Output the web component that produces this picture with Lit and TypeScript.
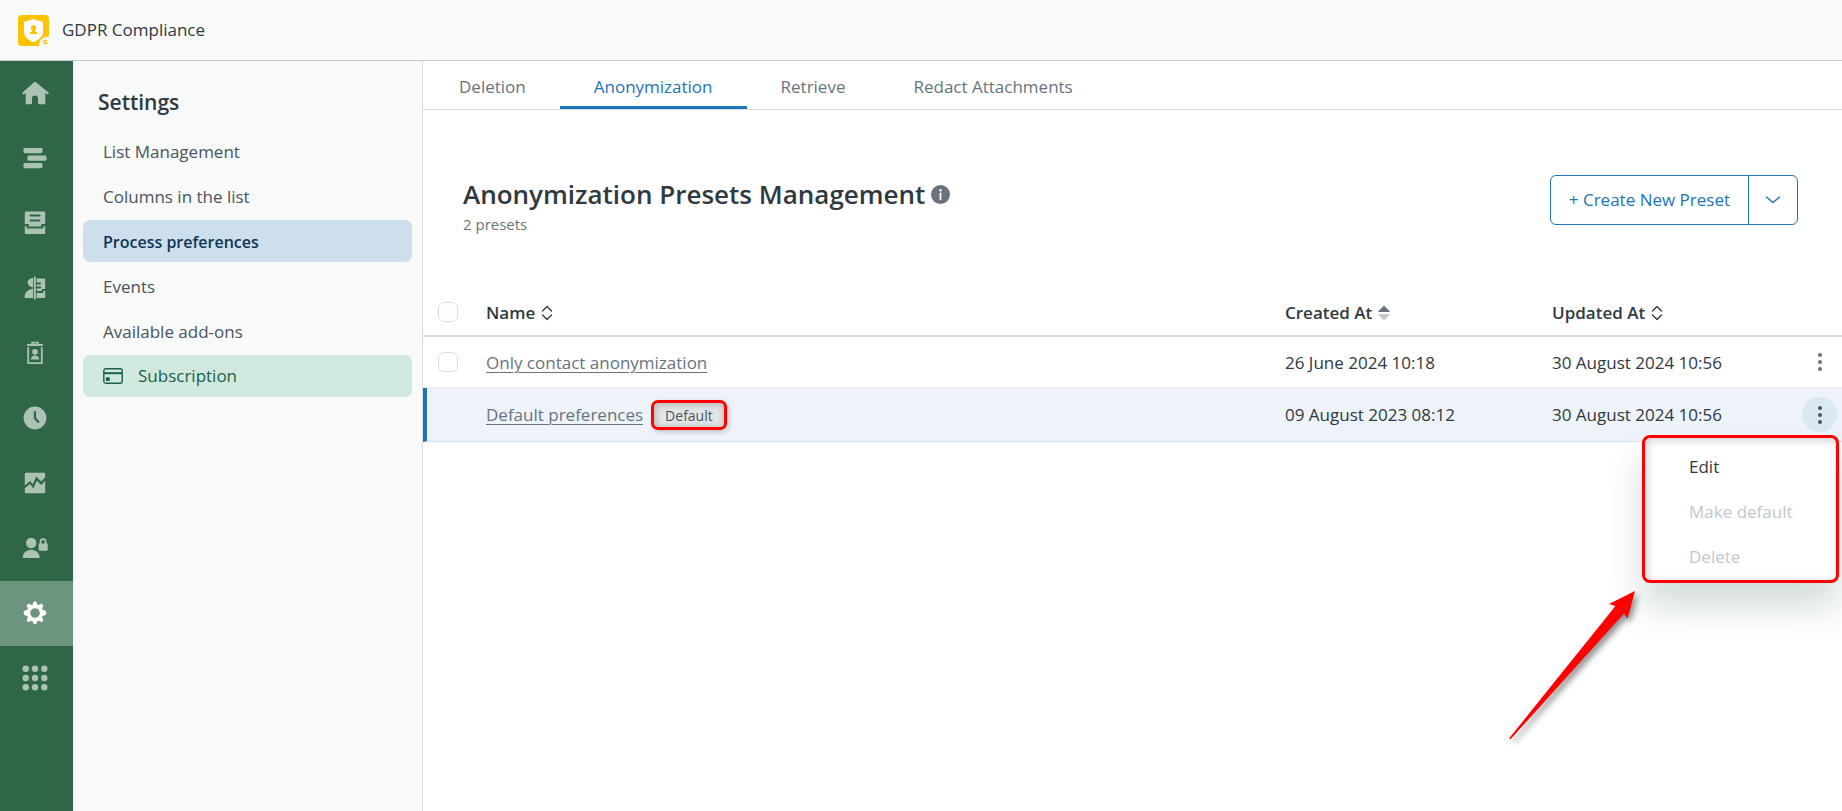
import { LitElement, html, svg, css, nothing } from "lit";
import { customElement, state } from "lit/decorators.js";
import { classMap } from "lit/directives/class-map.js";

interface NavIcon {
  label: string;
  active?: boolean;
  art: unknown;
}

interface Preset {
  name: string;
  created: string;
  updated: string;
  isDefault: boolean;
}

const NAV: NavIcon[] = [
  {
    label: "Home",
    art: svg`<path d="M13.4 2.9a1 1 0 0 1 1.2 0L27.2 13.300a1.100 1.100 0 0 1-1.300 1.800L24.300 14v10.200a1 1 0 0 1-1 1H18a1 1 0 0 1-1-1v-4.700a3 3 0 0 0-6 0v4.700a1 1 0 0 1-1 1H5.700a1 1 0 0 1-1-1V14l-1.600 1.100a1.100 1.100 0 0 1-1.300-1.800Z"/>`,
  },
  {
    label: "Views",
    art: svg`<rect x="2.500" y="4" width="19" height="5.200" rx="1.400"/><rect x="6.500" y="11.500" width="19" height="5.200" rx="1.400"/><rect x="2.500" y="19" width="19" height="5.200" rx="1.400"/>`,
  },
  {
    label: "Customer lists",
    art: svg`<path fill-rule="evenodd" d="M5 2.500h18a1.200 1.200 0 0 1 1.200 1.200V15h-4v2.500H7.800V15h-4V3.700A1.200 1.200 0 0 1 5 2.500Zm4.500 3a1 1 0 0 0 0 2h9a1 1 0 0 0 0-2Zm0 5a1 1 0 0 0 0 2h9a1 1 0 0 0 0-2Z"/><path d="M3.800 17.300h2v2.200h16.400v-2.200h2v6.500a1.200 1.200 0 0 1-1.200 1.200H5a1.200 1.200 0 0 1-1.200-1.200Z"/>`,
  },
  {
    label: "Tickets and users",
    art: svg`<rect x="12.800" y="2.500" width="2" height="23" rx="1"/><path d="M12 4v9.500c-7.200-1-7.200-9.300 0-9.500ZM12 14.500V24H3.700v-2c.5-4.500 4-6.500 8.300-7.500Z"/><path fill-rule="evenodd" d="M15.600 4.500H23a1.200 1.200 0 0 1 1.200 1.200V15h-3.500v2h-5.100v-2.500H19a1 1 0 0 0 0-2h-3.400v-2H19a1 1 0 0 0 0-2h-3.400Z"/><path d="M15.600 19h6.600v-2h2v6a1 1 0 0 1-1 1h-7.600Z"/>`,
  },
  {
    label: "Deleted users",
    art: svg`<path fill="none" stroke="currentColor" stroke-width="1.800" d="M7.200 8v16.200h13.600V8M11.200 6V3.700h5.600V6"/><rect x="5.800" y="5" width="16.400" height="2" rx="1"/><circle cx="14" cy="12.800" r="2.900"/><path d="M9.800 20.500c0-5.400 8.400-5.400 8.400 0Z"/>`,
  },
  {
    label: "Scheduled processes",
    art: svg`<path fill-rule="evenodd" d="M14 2.600a11.400 11.400 0 1 1 0 22.800 11.400 11.400 0 0 1 0-22.800Zm-1.200 5.600v6.400l4.200 4.600 1.700-1.500-3.700-4V8.200a1.100 1.100 0 0 0-2.200 0Z"/>`,
  },
  {
    label: "Reports",
    art: svg`<path d="M4.900 3.800h18.200a1.100 1.100 0 0 1 1.100 1.100v3.300l-4 4.300-5-5-3.500 7.700-2.600-3.200-5.300 4.500V4.900a1.100 1.100 0 0 1 1.100-1.100Z"/><path d="m3.800 19.200 5.200-4.300 3.300 4.600 3.500-7.700 4.400 4.200 4-4.300v11.400a1.100 1.100 0 0 1-1.100 1.100H4.900a1.100 1.100 0 0 1-1.100-1.100Z"/>`,
  },
  {
    label: "Permissions",
    art: svg`<circle cx="10.200" cy="9" r="5.200"/><path d="M1.700 24c0-11 17-11 17 0Z"/><path fill-rule="evenodd" d="M17.700 9.500h1V7.600a3.400 3.400 0 0 1 6.800 0v1.900h1.200v6.300a1 1 0 0 1-1 1h-7a1 1 0 0 1-1-1Zm2.800 0h3.200V7.600a1.600 1.600 0 0 0-3.200 0Z"/>`,
  },
  {
    label: "Settings",
    active: true,
    art: svg`<path fill-rule="evenodd" d="M14 2.600c1.100 0 1.800.7 1.900 1.700l.3 1.200 1.500.6 1.300-.9c.8-.5 1.800-.6 2.600.2s.8 1.900.2 2.700l-.8 1.200.6 1.500 1.500.4c1.200.2 2.300.9 2.300 2.800s-1.100 2.200-2.300 2.500l-1.500.4-.6 1.500.8 1.300c.5.800.5 1.900-.2 2.600s-1.800.7-2.600.2l-1.300-.8-1.500.6-.3 1.300c-.2 1-.8 1.700-1.900 1.700s-1.800-.7-1.900-1.700l-.3-1.300-1.500-.6-1.300.8c-.8.5-1.900.5-2.600-.2s-.8-1.800-.2-2.600l.8-1.300-.6-1.500-1.500-.4c-1.200-.3-2.300-.7-2.300-2.500s1.100-2.600 2.300-2.800l1.500-.4.6-1.500-.8-1.200c-.6-.8-.6-1.900.2-2.700s1.800-.7 2.600-.2l1.300.9 1.500-.6.3-1.200c.1-1 .8-1.700 1.900-1.700Zm0 6.600a4.800 4.800 0 1 0 0 9.600 4.800 4.800 0 0 0 0-9.600Z"/>`,
  },
  {
    label: "Products",
    art: svg`${[4.700, 14, 23.300].map((y) => [4.700, 14, 23.300].map((x) => svg`<circle cx=${x} cy=${y} r="3.200"/>`))}`,
  },
];

const SETTINGS = [
  "List Management",
  "Columns in the list",
  "Process preferences",
  "Events",
  "Available add-ons",
];

const TABS = ["Deletion", "Anonymization", "Retrieve", "Redact Attachments"];

const PRESETS: Preset[] = [
  { name: "Only contact anonymization", created: "26 June 2024 10:18", updated: "30 August 2024 10:56", isDefault: false },
  { name: "Default preferences", created: "09 August 2023 08:12", updated: "30 August 2024 10:56", isDefault: true },
];

const sortIdle = html`<svg class="sort" viewBox="0 0 12 16" aria-hidden="true">
  <path d="m1.500 6 4.500-4.500L10.500 6M1.500 10l4.500 4.500L10.500 10" fill="none" stroke="#2f3941" stroke-width="1.300" stroke-linecap="round" stroke-linejoin="round"/>
</svg>`;

const sortActive = html`<svg class="sort" viewBox="0 0 12 16" aria-hidden="true">
  <path d="M6 .5 11.500 6a.6.6 0 0 1-.5 1H1a.6.6 0 0 1-.5-1Z" fill="#68737d"/>
  <path d="M6 15.500 11.500 10a.6.6 0 0 0-.5-1H1a.6.6 0 0 0-.5 1Z" fill="#c2c8cc"/>
</svg>`;

@customElement("app-root")
export class AppRoot extends LitElement {
  @state() private tab = "Anonymization";
  @state() private section = "Process preferences";

  static styles = css`
    :host {
      display: flex;
      flex-direction: column;
      min-height: 100vh;
      overflow: hidden;
      background: #fff;
      color: #2f3941;
      font: 400 17px/24px "Open Sans", "Noto Sans", sans-serif;
    }
    * { box-sizing: border-box; }
    a { color: inherit; text-decoration: none; }
    button {
      margin: 0;
      padding: 0;
      border: 0;
      background: none;
      color: inherit;
      font: inherit;
      cursor: pointer;
    }
    h1, h2, p, ul { margin: 0; padding: 0; list-style: none; }
    svg { display: block; flex: none; }

    .topbar {
      display: flex;
      align-items: center;
      gap: 13px;
      height: 61px;
      padding: 0 18px;
      border-bottom: 1px solid #c2c8cc;
      background: #f8f9f9;
      font-weight: 500;
    }
    .logo { width: 31px; height: 31px; }

    .body { display: flex; flex: 1; }

    .rail { flex: none; width: 73px; background: #2f6647; }
    .rail-link {
      display: flex;
      align-items: center;
      height: 65px;
      padding: 0 0 2px 21px;
      color: #acc2b5;
    }
    .rail-link.active { background: #6d947e; color: #fff; }
    .rail-link svg { width: 28px; height: 28px; fill: currentColor; }

    .side {
      flex: none;
      width: 350px;
      padding: 25px 10px;
      border-right: 1px solid #d8dcde;
      background: #f8f9f9;
    }
    .side-title { padding: 0 15px; font-size: 21px; line-height: 32px; font-weight: 600; }
    .side-list { display: grid; gap: 3px; padding-top: 12px; }
    .side-link {
      display: flex;
      align-items: center;
      gap: 15px;
      height: 42px;
      padding: 2px 20px 0;
      border-radius: 7px;
      color: #49545c;
    }
    .side-link.active { background: #cddeec; color: #0f3554; font-size: 16px; font-weight: 600; }
    .side-link.plan { padding-top: 0; background: #d1e8df; color: #186146; }
    .card { width: 20px; height: 16px; }

    .main { flex: 1; min-width: 0; }
    .tabs { display: flex; height: 49px; padding-left: 2px; border-bottom: 1px solid #d8dcde; }
    .tab {
      padding: 6px 34px 0;
      border-bottom: 3px solid transparent;
      color: #68737d;
      white-space: nowrap;
    }
    .tab.active { border-bottom-color: #1f73b7; color: #1f73b7; }

    .head {
      display: flex;
      align-items: flex-start;
      justify-content: space-between;
      padding: 65px 44px 54px 40px;
    }
    .title-row { display: flex; align-items: center; gap: 6px; }
    .title { font-size: 26px; line-height: 38px; font-weight: 600; }
    .info { width: 19px; height: 19px; }
    .count { font-size: 15px; line-height: 22px; color: #68737d; }
    .split {
      display: flex;
      height: 50px;
      border: 1px solid #1f73b7;
      border-radius: 6px;
      color: #1f73b7;
    }
    .create { padding: 0 18px; }
    .more {
      display: grid;
      place-items: center;
      width: 49px;
      border-left: 1px solid #1f73b7;
    }

    table { width: 100%; border-collapse: separate; border-spacing: 0; table-layout: fixed; }
    th, td { height: 51px; padding: 2px 0 0; text-align: left; border-bottom: 1px solid #e9ebed; }
    th { height: 48px; border-bottom: 2px solid #d8dcde; font-weight: 600; }
    .col-check { width: 63px; }
    .col-date { width: 267px; }
    .col-actions { width: 23px; }
    .pick { padding: 0 0 0 15px; }
    .pick input {
      display: block;
      appearance: none;
      width: 20px;
      height: 20px;
      margin: 0;
      border: 1px solid #d8dcde;
      border-radius: 6px;
      background: #fff;
    }
    .sorter { display: inline-flex; align-items: center; gap: 6px; font-weight: 600; }
    .sort { width: 12px; height: 16px; }
    .name { display: flex; align-items: center; gap: 8px; color: #68737d; }
    .name a { text-decoration: underline; text-underline-offset: 3px; text-decoration-thickness: 1px; }
    tr.current td { height: 54px; padding-top: 0; background: #edf3f9; border-bottom-color: #cee2f2; }
    tr.current td:first-child { border-left: 4px solid #1f73b7; }
    .badge {
      padding: 3px 11px 1px;
      border: 3px solid #f00;
      border-radius: 7px;
      background: #e3e5e7;
      box-shadow: inset 1px 1px 6px 1px rgba(0, 0, 0, 0.2), 2px 2px 5px rgba(0, 0, 0, 0.2);
      color: #49545c;
      font-size: 14px;
      line-height: 20px;
    }
    td.actions, tr.current td.actions { position: relative; padding: 0; }
    .kebab {
      display: grid;
      place-items: center;
      width: 35px;
      height: 35px;
      margin-left: -17px;
      border-radius: 50%;
      color: #68737d;
    }
    .current .kebab { background: #dae8f1; color: #49545c; }
    .kebab svg { width: 4px; height: 18px; fill: currentColor; }

    .menu {
      position: absolute;
      top: 47px;
      right: 3px;
      z-index: 1;
      width: 197px;
      padding: 6px 0 1px;
      border: 3px solid #f00;
      border-radius: 8px;
      background: #fff;
      box-shadow: inset 2px 2px 8px rgba(0, 0, 0, 0.2), 0 24px 36px rgba(10, 60, 60, 0.18);
    }
    .menu-item { display: block; width: 100%; height: 45px; padding-left: 44px; text-align: left; }
    .menu-item:disabled { color: #c2c8cc; cursor: default; }
    .arrow {
      position: absolute;
      top: 202px;
      right: 206px;
      z-index: 1;
      width: 128px;
      height: 150px;
      fill: #f00;
      overflow: visible;
      filter: drop-shadow(3px 4px 3px rgba(0, 0, 0, 0.45));
    }
  `;

  private renderMenu() {
    return html`
      <div class="menu" role="menu">
        <button class="menu-item" role="menuitem">Edit</button>
        <button class="menu-item" role="menuitem" disabled>Make default</button>
        <button class="menu-item" role="menuitem" disabled>Delete</button>
      </div>
      <svg class="arrow" viewBox="0 0 128 150" aria-hidden="true">
        <path d="m127 1-26 13 6.500 2L1 148.500l1.700.5L116 23.500l3.500 5Z" />
      </svg>
    `;
  }

  private renderRow(p: Preset) {
    return html`
      <tr class=${classMap({ current: p.isDefault })}>
        <td class="pick">${p.isDefault ? nothing : html`<input type="checkbox" aria-label=${`Select ${p.name}`} />`}</td>
        <td>
          <div class="name">
            <a href="#preset">${p.name}</a>${p.isDefault ? html`<span class="badge">Default</span>` : nothing}
          </div>
        </td>
        <td>${p.created}</td>
        <td>${p.updated}</td>
        <td class="actions">
          <button class="kebab" aria-label=${`Actions for ${p.name}`}>
            <svg viewBox="0 0 4 18"><circle cx="2" cy="2" r="2" /><circle cx="2" cy="9" r="2" /><circle cx="2" cy="16" r="2" /></svg>
          </button>
          ${p.isDefault ? this.renderMenu() : nothing}
        </td>
      </tr>
    `;
  }

  render() {
    return html`
      <header class="topbar">
        <svg class="logo" viewBox="0 0 31 31" aria-hidden="true">
          <rect width="31" height="31" rx="4" fill="#fbc300" />
          <path d="M15.500 4 25 7v10c0 5-5 8.500-9.500 10.200C11 25.500 6 22 6 17V7Z" fill="#fff" />
          <circle cx="15.500" cy="12.700" r="2.600" fill="#fbc300" />
          <path d="M14.300 14h2.400l.5 2.500 2 .9V19h-7.400v-1.600l2-.9Z" fill="#fbc300" />
          <path d="M21 31c0-6 4-9.500 10-9.500V31Z" fill="#f8f9f9" />
          <path d="M28.600 25.800a1.700 1.700 0 1 0 .4 1.800h-1.500" fill="none" stroke="#fbc300" stroke-width="1.300" />
        </svg>
        <span>GDPR Compliance</span>
      </header>
      <div class="body">
        <nav class="rail" aria-label="Main">
          ${NAV.map(
            (n) => html`<a class=${classMap({ "rail-link": true, active: !!n.active })} href="#nav" aria-label=${n.label}>
              <svg viewBox="0 0 28 28">${n.art}</svg>
            </a>`
          )}
        </nav>
        <aside class="side">
          <h2 class="side-title">Settings</h2>
          <ul class="side-list">
            ${SETTINGS.map(
              (s) => html`<li>
                <a class=${classMap({ "side-link": true, active: s === this.section })} href="#settings" @click=${() => (this.section = s)}>${s}</a>
              </li>`
            )}
            <li>
              <a class="side-link plan" href="#subscription">
                <svg class="card" viewBox="0 0 20 16" aria-hidden="true">
                  <rect x=".8" y=".8" width="18.400" height="14.400" rx="2" fill="none" stroke="#186146" stroke-width="1.400" />
                  <path d="M1 5.200h18" stroke="#186146" stroke-width="2" />
                  <rect x="2.800" y="9.200" width="4" height="3.800" rx=".8" fill="#186146" />
                </svg>
                Subscription
              </a>
            </li>
          </ul>
        </aside>
        <main class="main">
          <div class="tabs" role="tablist">
            ${TABS.map(
              (t) => html`<button class=${classMap({ tab: true, active: t === this.tab })} role="tab" aria-selected=${t === this.tab} @click=${() => (this.tab = t)}>${t}</button>`
            )}
          </div>
          <section class="head">
            <div>
              <div class="title-row">
                <h1 class="title">Anonymization Presets Management</h1>
                <svg class="info" viewBox="0 0 19 19" aria-hidden="true">
                  <circle cx="9.500" cy="9.500" r="9.500" fill="#68737d" />
                  <circle cx="9.500" cy="5.200" r="1.200" fill="#fff" />
                  <path d="M9.500 8.300v6" stroke="#fff" stroke-width="1.800" stroke-linecap="round" />
                </svg>
              </div>
              <p class="count">2 presets</p>
            </div>
            <div class="split">
              <button class="create">+ Create New Preset</button>
              <button class="more" aria-label="More create options">
                <svg width="16" height="10" viewBox="0 0 16 10"><path d="m1.500 2 6.500 5.500L14.500 2" fill="none" stroke="#1f73b7" stroke-width="1.400" stroke-linecap="round" /></svg>
              </button>
            </div>
          </section>
          <table>
            <colgroup>
              <col class="col-check" />
              <col />
              <col class="col-date" />
              <col class="col-date" />
              <col class="col-actions" />
            </colgroup>
            <thead>
              <tr>
                <th class="pick"><input type="checkbox" aria-label="Select all presets" /></th>
                <th><button class="sorter">Name ${sortIdle}</button></th>
                <th><button class="sorter">Created At ${sortActive}</button></th>
                <th><button class="sorter">Updated At ${sortIdle}</button></th>
                <th aria-label="Actions"></th>
              </tr>
            </thead>
            <tbody>
              ${PRESETS.map((p) => this.renderRow(p))}
            </tbody>
          </table>
        </main>
      </div>
    `;
  }
}
